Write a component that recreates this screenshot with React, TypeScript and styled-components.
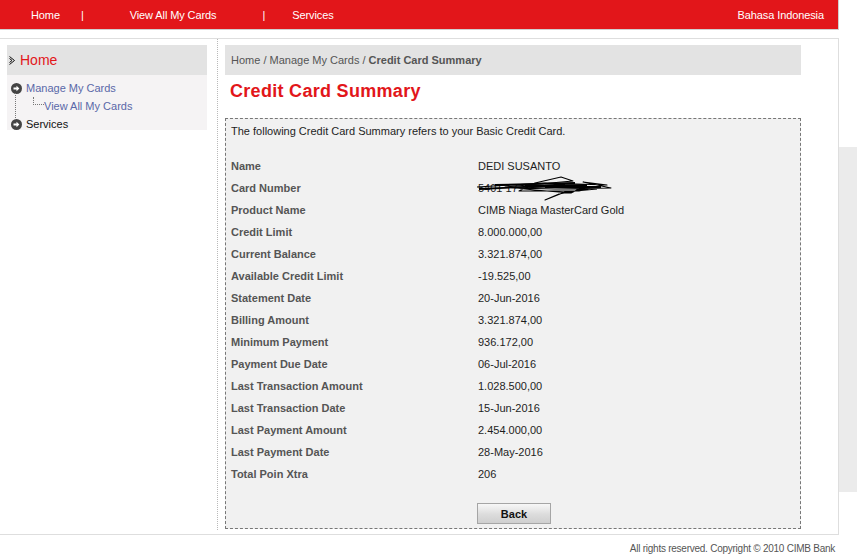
import styled, { createGlobalStyle } from 'styled-components';

const GlobalStyle = createGlobalStyle`
  html, body {
    margin: 0;
    padding: 0;
    background: #fff;
    font-family: "Liberation Sans", Arial, sans-serif;
    font-size: 11px;
    color: #222;
  }
`;

const Page = styled.div`
  display: flex;
  align-items: flex-start;
  width: 857px;
`;

const Main = styled.div`
  width: 839px;
  flex-shrink: 0;
`;

const SideShade = styled.div`
  margin-top: 147px;
  width: 18px;
  height: 345px;
  background: #ebebeb;
`;

const TopBar = styled.div`
  display: flex;
  align-items: center;
  height: 29px;
  width: 838px;
  background: #e2161a;
  border-right: 1px solid #cfcfcf;
  border-bottom: 1px solid #cfcfcf;
  color: #fff;
  letter-spacing: -0.1px;
`;

const NavLink = styled.span<{ $ml: number }>`
  margin-left: ${(p) => p.$ml}px;
  white-space: nowrap;
`;

const NavSpacer = styled.span`
  flex: 1;
`;

const Panel = styled.div`
  margin-top: 8px;
  height: 495px;
  border: 1px solid #dedede;
  border-left: none;
  display: flex;
`;

const Sidebar = styled.div`
  width: 218px;
  padding: 6px 0 0 7px;
  box-sizing: border-box;
  border-right: 1px dotted #b9b9b9;
  margin-bottom: 4px;
  flex-shrink: 0;
`;

const SideHead = styled.div`
  width: 200px;
  height: 30px;
  background: #e3e3e3;
  display: flex;
  align-items: center;
  gap: 5px;
  padding-left: 2px;
  box-sizing: border-box;
  color: #e2161a;
  font-size: 14px;
`;

const SideMenu = styled.div`
  position: relative;
  width: 200px;
  height: 55px;
  background: #f5f3f4;
  padding-top: 4px;
  box-sizing: border-box;
`;

const MenuItem = styled.div<{ $link?: boolean }>`
  display: flex;
  align-items: center;
  gap: 4px;
  height: 18px;
  padding-left: 4px;
  color: ${(p) => (p.$link ? '#5a68a8' : '#111')};
`;

const SubItem = styled.div`
  display: flex;
  align-items: center;
  height: 18px;
  padding-left: 26px;
  color: #5a68a8;
`;

const Connector = styled.span`
  align-self: flex-start;
  width: 10px;
  height: 7px;
  border-left: 1px dotted #777;
  border-bottom: 1px dotted #777;
`;

const TreeLine = styled.span`
  position: absolute;
  left: 8px;
  top: 18px;
  height: 25px;
  border-left: 1px dotted #777;
`;

const Content = styled.div`
  padding: 6px 0 0 7px;
  width: 576px;
`;

const Crumbs = styled.div`
  height: 30px;
  background: #e3e3e3;
  display: flex;
  align-items: center;
  padding-left: 6px;
  color: #555;
`;

const Title = styled.h1`
  margin: 5px 0 0 5px;
  font-size: 18px;
  line-height: 22px;
  letter-spacing: 0.3px;
  color: #e2161a;
  font-weight: bold;
`;

const SummaryBox = styled.div`
  margin-top: 16px;
  height: 411px;
  box-sizing: border-box;
  border: 1px dashed #777;
  background: #f1f1f1;
  padding: 6px 0 0 5px;
`;

const Intro = styled.div`
  line-height: 13px;
  color: #1e1e1e;
`;

const Rows = styled.div`
  margin-top: 17px;
  display: grid;
  grid-template-columns: 247px 1fr;
  grid-auto-rows: 22px;
  align-items: center;
`;

const Label = styled.div`
  font-weight: bold;
  color: #555;
`;

const Value = styled.div`
  position: relative;
  color: #1e1e1e;
`;

const Scribble = styled.svg`
  position: absolute;
  left: -3px;
  top: -7px;
`;

const ButtonRow = styled.div`
  margin-top: 18px;
  padding-left: 246px;
`;

const Button = styled.button`
  width: 74px;
  height: 21px;
  border: 1px solid #a5a5a5;
  background: linear-gradient(#f7f7f7, #dcdcdc 55%, #cfcfcf);
  font-family: "Liberation Sans", Arial, sans-serif;
  font-size: 11px;
  font-weight: bold;
  color: #111;
  padding: 0;
`;

const Footer = styled.div`
  text-align: right;
  padding: 8px 4px 0 0;
  font-size: 10px;
  letter-spacing: -0.25px;
  color: #555;
`;

const CircleArrow = () => (
  <svg width="11" height="11" viewBox="0 0 11 11">
    <circle cx="5.5" cy="5.5" r="5.5" fill="#444" />
    <path d="M2.5 4.6h3V2.8l2.9 2.7-2.9 2.7V6.4h-3z" fill="#fff" />
  </svg>
);

const HeadArrow = () => (
  <svg width="6" height="9" viewBox="0 0 6 9">
    <path d="M0.5 0.5L5.5 4.5L0.5 8.5" fill="none" stroke="#111" strokeWidth="1" />
    <path d="M0.5 2.5L3 4.5L0.5 6.5" fill="none" stroke="#111" strokeWidth="1" />
  </svg>
);

const rows: [string, string][] = [
  ['Name', 'DEDI SUSANTO'],
  ['Card Number', '5401 17'],
  ['Product Name', 'CIMB Niaga MasterCard Gold'],
  ['Credit Limit', '8.000.000,00'],
  ['Current Balance', '3.321.874,00'],
  ['Available Credit Limit', '-19.525,00'],
  ['Statement Date', '20-Jun-2016'],
  ['Billing Amount', '3.321.874,00'],
  ['Minimum Payment', '936.172,00'],
  ['Payment Due Date', '06-Jul-2016'],
  ['Last Transaction Amount', '1.028.500,00'],
  ['Last Transaction Date', '15-Jun-2016'],
  ['Last Payment Amount', '2.454.000,00'],
  ['Last Payment Date', '28-May-2016'],
  ['Total Poin Xtra', '206'],
];

const App = () => {
  return (
    <>
      <GlobalStyle />
      <Page>
        <Main>
          <TopBar>
            <NavLink $ml={31}>Home</NavLink>
            <NavLink $ml={21}>|</NavLink>
            <NavLink $ml={46}>View All My Cards</NavLink>
            <NavLink $ml={46}>|</NavLink>
            <NavLink $ml={27}>Services</NavLink>
            <NavSpacer />
            <NavLink $ml={0} style={{ marginRight: 14 }}>Bahasa Indonesia</NavLink>
          </TopBar>
          <Panel>
            <Sidebar>
              <SideHead>
                <HeadArrow />
                Home
              </SideHead>
              <SideMenu>
                <TreeLine />
                <MenuItem $link>
                  <CircleArrow />
                  Manage My Cards
                </MenuItem>
                <SubItem>
                  <Connector />
                  View All My Cards
                </SubItem>
                <MenuItem>
                  <CircleArrow />
                  Services
                </MenuItem>
              </SideMenu>
            </Sidebar>
            <Content>
              <Crumbs>
                Home / Manage My Cards /&nbsp;<b>Credit Card Summary</b>
              </Crumbs>
              <Title>Credit Card Summary</Title>
              <SummaryBox>
                <Intro>The following Credit Card Summary refers to your Basic Credit Card.</Intro>
                <Rows>
                  {rows.map(([label, value]) => (
                    <>
                      <Label key={label}>{label}</Label>
                      <Value key={label + 'v'}>
                        {value}
                        {label === 'Card Number' && (
                          <Scribble width="140" height="28" viewBox="0 0 140 28">
                            <path
                              d="M2 12 L70 8 L132 10 L108 7 L136 13 L80 14 L40 13 L110 11 L96 18 L60 15 L30 12 L98 6 L86 2 L60 8 L44 16 L104 16 L120 12 L84 19 L70 25 L90 17 L122 14"
                              fill="none"
                              stroke="#000"
                              strokeWidth="1.1"
                              strokeLinejoin="round"
                            />
                            <path
                              d="M4 14 L90 10 L70 12 L126 12 M20 10 L100 8 M50 11 L112 10"
                              fill="none"
                              stroke="#000"
                              strokeWidth="1.8"
                            />
                          </Scribble>
                        )}
                      </Value>
                    </>
                  ))}
                </Rows>
                <ButtonRow>
                  <Button>Back</Button>
                </ButtonRow>
              </SummaryBox>
            </Content>
          </Panel>
          <Footer>All rights reserved. Copyright © 2010 CIMB Bank</Footer>
        </Main>
        <SideShade />
      </Page>
    </>
  );
};

export default App;
